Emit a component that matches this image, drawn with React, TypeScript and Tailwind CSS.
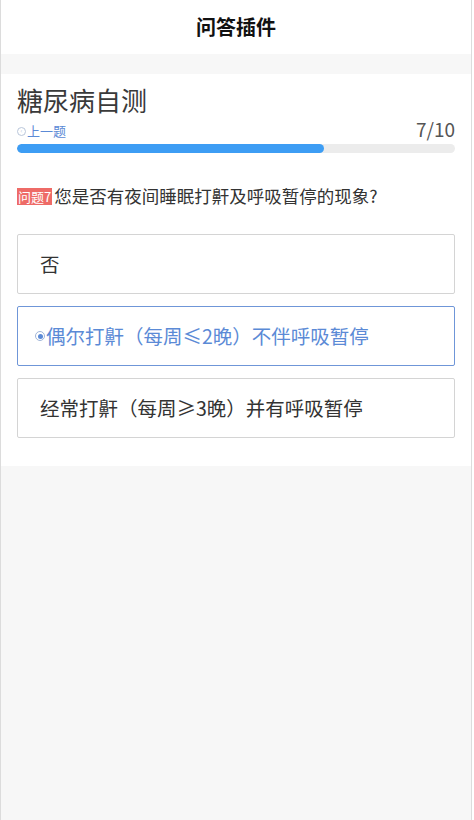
import React from 'react';

const options = [
  { text: '否', selected: false },
  { text: '偶尔打鼾（每周≤2晚）不伴呼吸暂停', selected: true },
  { text: '经常打鼾（每周≥3晚）并有呼吸暂停', selected: false },
];

const App: React.FC = () => {
  const progress = 70;

  return (
    <div
      className="min-h-[820px] w-[472px] bg-[#f7f7f7] border-x border-[#dcdcdc]"
      style={{ fontFamily: '"Noto Sans CJK SC", "Noto Sans", sans-serif' }}
    >
      {/* Header */}
      <div className="h-[54px] bg-white flex items-center justify-center">
        <h1 className="text-[20px] leading-[28px] font-bold text-[#111]">问答插件</h1>
      </div>

      {/* Quiz card */}
      <div className="mt-[20px] bg-white px-[16px] pt-[8px] pb-[28px]">
        <h2 className="text-[26px] leading-[36px] text-[#3a3a3a]">糖尿病自测</h2>

        <div className="flex items-end justify-between h-[22px]">
          <button className="flex items-center text-[13px] leading-[18px] text-[#5b8ad6]">
            <span className="inline-flex w-[9px] h-[9px] rounded-full border border-[#b9c6da] items-center justify-center mr-[1px]">
              <span className="text-[6px] leading-none text-[#b9c6da]">‹</span>
            </span>
            上一题
          </button>
          <span className="text-[19px] leading-[22px] text-[#555]">7/10</span>
        </div>

        <div className="mt-[4px] h-[9px] rounded-full bg-[#ececec] overflow-hidden">
          <div className="h-full rounded-full bg-[#3d9df4]" style={{ width: `${progress}%` }} />
        </div>

        <div className="mt-[32px] flex items-center">
          <span className="bg-[#ee6b67] text-white text-[13px] leading-[17px] px-[1px]">问题7</span>
          <span className="ml-[2px] text-[17.5px] leading-[22px] text-[#333]">您是否有夜间睡眠打鼾及呼吸暂停的现象?</span>
        </div>

        <div className="mt-[27px] flex flex-col gap-[12px]">
          {options.map((o, i) => (
            <div
              key={i}
              className={`h-[60px] flex items-center border rounded-[2px] ${
                o.selected ? 'border-[#6f96d8] text-[#5b8ad6] pl-[17px]' : 'border-[#d4d4d4] text-[#333] pl-[22px]'
              }`}
            >
              {o.selected && (
                <span className="inline-flex w-[10px] h-[10px] rounded-full border border-[#9fb5d8] items-center justify-center mr-[1px]">
                  <span className="w-[5px] h-[5px] rounded-full bg-[#5b8ad6]" />
                </span>
              )}
              <span className="text-[19.5px] leading-[24px]">{o.text}</span>
            </div>
          ))}
        </div>
      </div>
    </div>
  );
};

export default App;
